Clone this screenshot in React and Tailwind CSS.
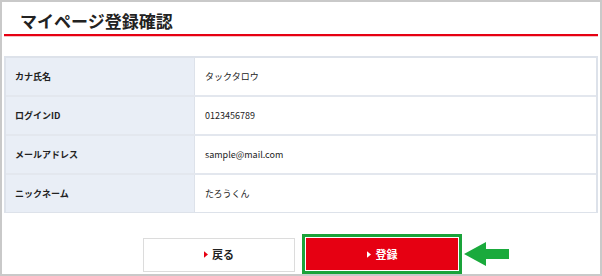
import React from 'react'

const rows = [
  { label: 'カナ氏名', value: 'タックタロウ' },
  { label: 'ログインID', value: '0123456789' },
  { label: 'メールアドレス', value: 'sample@mail.com' },
  { label: 'ニックネーム', value: 'たろうくん' },
]

const Triangle = ({ className }) => (
  <svg viewBox="0 0 5 8" className={className} fill="currentColor">
    <path d="M0 0L5 4L0 8z" />
  </svg>
)

export default function App() {
  return (
    <div
      className="w-[602px] h-[276px] bg-white border-2 border-[#c9c9c9] flex flex-col text-[#222]"
      style={{ fontFamily: '"Noto Sans CJK JP", "Noto Sans", sans-serif' }}
    >
      <div className="mx-[2px] h-[34px] pl-[16px] pt-[7px] border-b-2 border-[#e60012] shadow-[0_1px_0_#f7c2c5]">
        <h1 className="text-[17px] leading-[24px] font-bold">マイページ登録確認</h1>
      </div>

      <div className="mx-[2px] mt-[20px] border-2 border-b border-[#dde2ea]">
        {rows.map((row, i) => (
          <div
            key={row.label}
            className={`flex h-[37px] box-content ${i > 0 ? 'border-t-2 border-[#e3e7ee]' : ''}`}
          >
            <div className="w-[189px] bg-[#e9eef6] border-r border-[#dde2ea] flex items-center pl-[9px] text-[9px] font-semibold">
              {row.label}
            </div>
            <div className="flex-1 flex items-center pl-[10px] text-[9px]">{row.value}</div>
          </div>
        ))}
      </div>

      <div className="flex items-center mt-[21px] ml-[141px]">
        <button className="w-[152px] h-[34px] border border-[#dcdcdc] bg-white flex items-center justify-center gap-[4px] text-[11px] font-bold mt-[1px]">
          <Triangle className="w-[4px] h-[7px] text-[#e60012]" />
          戻る
        </button>
        <div className="ml-[7px] border-[3px] border-[#1aa33a] p-[1px] bg-white">
          <button className="w-[152px] h-[32px] bg-[#e60012] text-white flex items-center justify-center gap-[5px] text-[11px] font-bold">
            <Triangle className="w-[4px] h-[7px] text-white" />
            登録
          </button>
        </div>
        <svg viewBox="0 0 46 24" className="w-[46px] h-[24px] ml-[2px]" fill="#1aaa3c">
          <path d="M0 12L22 0V7H45V17H22V24z" />
        </svg>
      </div>
    </div>
  )
}
